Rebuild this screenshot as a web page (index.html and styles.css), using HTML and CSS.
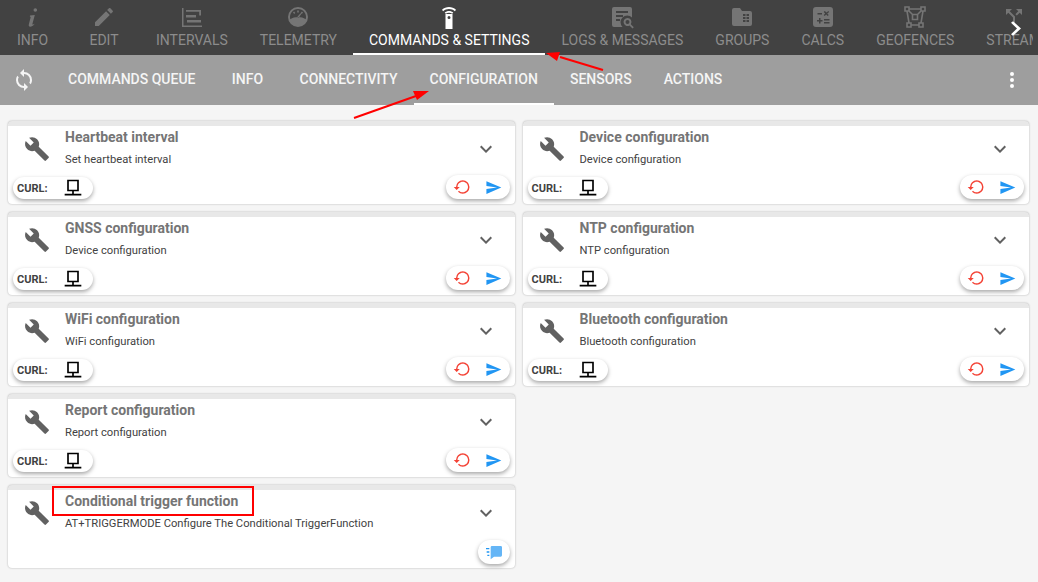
FILE: index.html
```html
<!DOCTYPE html>
<html lang="en">
<head>
  <meta charset="UTF-8">
  <title>Commands &amp; Settings</title>
  <link rel="stylesheet" href="styles.css">
</head>
<body>
  <svg width="0" height="0" class="defs">
    <symbol id="wrench" viewBox="0 0 24 24"><path d="M22.7,19L13.6,9.9C14.5,7.6 14,4.9 12.1,3C10.1,1 7.1,0.6 4.7,1.7L9,6L6,9L1.6,4.7C0.4,7.1 0.9,10.1 2.9,12.1C4.8,14 7.5,14.5 9.8,13.6L18.9,22.7C19.3,23.1 19.9,23.1 20.3,22.7L22.6,20.4C23.1,20 23.1,19.3 22.7,19Z"/></symbol>
    <symbol id="chevron" viewBox="0 0 24 24"><path d="M7.41,8.58L12,13.17L16.59,8.58L18,10L12,16L6,10L7.41,8.58Z"/></symbol>
    <symbol id="desktop" viewBox="0 0 24 24"><path d="M5 2h14v14H5zM7 4v10h10V4zM11 16h2v3h-2zM2 19h20v2H2z" fill-rule="evenodd"/></symbol>
    <symbol id="restore" viewBox="0 0 24 24"><path d="M13 3a9 9 0 0 0-9 9H1l3.89 3.89.07.14L9 12H6c0-3.87 3.13-7 7-7s7 3.13 7 7-3.13 7-7 7c-1.93 0-3.68-.79-4.94-2.06l-1.42 1.42A8.954 8.954 0 0 0 13 21a9 9 0 0 0 0-18z"/></symbol>
    <symbol id="send" viewBox="0 0 24 24"><path d="M2,21L23,12L2,3V10L17,12L2,14V21Z"/></symbol>
  </svg>

  <!-- Main tabs -->
  <nav class="tabs">
    <div class="tab-strip">
      <a class="tab">
        <svg class="tab-icon" viewBox="0 0 24 24"><path d="M13.500 5a1.800 1.800 0 1 1 3.600 0 1.800 1.800 0 0 1-3.600 0zM10 10.500l4.800-.5-2.400 9c-.2.800.4.800 1.800-.3l.3.400c-1.500 1.800-2.800 2.700-4.300 2.700-1.300 0-1.700-.9-1.400-2.200l1.800-7c.1-.6-.2-1-.8-1.100z"/></svg>
        <span>Info</span>
      </a>
      <a class="tab">
        <svg class="tab-icon" viewBox="0 0 24 24"><path d="M20.71,7.04C21.1,6.65 21.1,6 20.71,5.63L18.37,3.29C18,2.9 17.35,2.9 16.96,3.29L15.12,5.12L18.87,8.87M3,17.25V21H6.75L17.81,9.93L14.06,6.18L3,17.25Z"/></svg>
        <span>Edit</span>
      </a>
      <a class="tab">
        <svg class="tab-icon" viewBox="0 0 24 24"><path d="M2 3h1.500v17.500H22V22H2zM6 5h15v5.500h-1.800V6.800H6zM6 10h10v2.500H6zM7 15h14v2.500H7z"/></svg>
        <span>Intervals</span>
      </a>
      <a class="tab">
        <svg class="tab-icon" viewBox="0 0 24 24"><path fill-rule="evenodd" d="M12 2a10 10 0 1 1 0 20 10 10 0 0 1 0-20zm0 2a8 8 0 0 0-7.700 10.200C6.500 12.800 9.200 12 12 12s5.500.8 7.700 2.200A8 8 0 0 0 12 4zm-.8 1.500h1.600v2h-1.600zM7 7.300l1.200-.9 1.100 1.600-1.200.9zm8.800-.9 1.200.9-1.100 1.600-1.200-.9zm-1.300 1.800.9.500-2.700 4-1.300-.9z"/></svg>
        <span>Telemetry</span>
      </a>
      <a class="tab active">
        <svg class="tab-icon" viewBox="0 0 24 24"><path fill-rule="evenodd" d="M8.500 9h7v15h-7zM12 11a1.500 1.500 0 1 0 0 3 1.500 1.500 0 0 0 0-3zM5 4.800C8.800 1.100 15.200 1.100 19 4.800l-1.100 1.400C14.800 3.200 9.200 3.200 6.100 6.200zM7.700 7.600c2.300-2.200 6.300-2.200 8.600 0l-1.100 1.200c-1.700-1.500-4.700-1.500-6.400 0z"/></svg>
        <span>Commands &amp; Settings</span>
      </a>
      <a class="tab">
        <svg class="tab-icon" viewBox="0 0 24 24"><path fill-rule="evenodd" d="M4 2h16a2 2 0 0 1 2 2v8.500a6.500 6.500 0 0 0-9.500 9.500H4a2 2 0 0 1-2-2V4a2 2 0 0 1 2-2zm2 4v2h12V6zm0 4v2h7v-2zm0 4v2h4v-2zm11.500-1a4 4 0 0 1 3.300 6.200l3 3-1.300 1.300-3-3a4 4 0 1 1-2-7.500zm0 2a2 2 0 1 0 0 4 2 2 0 0 0 0-4z"/></svg>
        <span>Logs &amp; Messages</span>
      </a>
      <a class="tab">
        <svg class="tab-icon" viewBox="0 0 24 24"><path fill-rule="evenodd" d="M4 3h6l2 3h8a2 2 0 0 1 2 2v11a2 2 0 0 1-2 2H4a2 2 0 0 1-2-2V5a2 2 0 0 1 2-2zm9 6v2h2.500V9zm3.500 0v2H19V9zM13 12v2h2.500v-2zm3.500 0v2H19v-2zM13 15v2h2.500v-2zm3.500 0v2H19v-2z"/></svg>
        <span>Groups</span>
      </a>
      <a class="tab">
        <svg class="tab-icon" viewBox="0 0 24 24"><path fill-rule="evenodd" d="M5 2h14a3 3 0 0 1 3 3v14a3 3 0 0 1-3 3H5a3 3 0 0 1-3-3V5a3 3 0 0 1 3-3zm1.500 6v1.500H11V8zm7.200-2-1 1 1.500 1.500-1.500 1.500 1 1 1.500-1.500 1.500 1.500 1-1-1.500-1.500L18.200 7l-1-1-1.500 1.500zM8 13v2H6v1.500h2v2h1.500v-2h2V15h-2v-2zm5 1v1.500h5.500V14zm0 3v1.500h5.500V17z"/></svg>
        <span>Calcs</span>
      </a>
      <a class="tab">
        <svg class="tab-icon outline" viewBox="0 0 24 24"><path d="M2 2h4v4H2zM18 2h4v4h-4zM4 18h4v4H4zM16 18h4v4h-4zM6 4h12M4 6l2 12M20 6l-2 12M8 20h8M9.500 9.500h5v5h-5zM6 6l3.500 3.500M18 6l-3.500 3.500"/></svg>
        <span>Geofences</span>
      </a>
      <a class="tab">
        <svg class="tab-icon" viewBox="0 0 24 24"><path d="M14,4L16.29,6.29L13.41,9.17L14.83,10.59L17.71,7.71L20,10V4M10,4H4V10L6.29,7.71L11,12.41V20H13V11.59L7.710,6.290"/></svg>
        <span>Stream</span>
      </a>
    </div>
    <svg class="tabs-next" viewBox="0 0 24 24"><path d="M6 3.500 9 1l12 11L9 23l-3-2.500 9-8.500z"/></svg>
  </nav>

  <!-- Sub tabs -->
  <div class="subtabs">
    <svg class="sync" viewBox="0 0 24 24"><path d="M12,18A6,6 0 0,1 6,12C6,11 6.250,10.030 6.700,9.200L5.240,7.740C4.460,8.970 4,10.430 4,12A8,8 0 0,0 12,20V23L16,19L12,15M12,4V1L8,5L12,9V6A6,6 0 0,1 18,12C18,13 17.750,13.970 17.300,14.800L18.760,16.260C19.540,15.030 20,13.570 20,12A8,8 0 0,0 12,4Z"/></svg>
    <a class="subtab">Commands Queue</a>
    <a class="subtab">Info</a>
    <a class="subtab">Connectivity</a>
    <a class="subtab active">Configuration</a>
    <a class="subtab">Sensors</a>
    <a class="subtab">Actions</a>
    <svg class="more" viewBox="0 0 24 24"><path d="M12 16a2 2 0 1 1 0 4 2 2 0 0 1 0-4zm0-6a2 2 0 1 1 0 4 2 2 0 0 1 0-4zm0-6a2 2 0 1 1 0 4 2 2 0 0 1 0-4z"/></svg>
  </div>

  <!-- Cards -->
  <main class="cards">
    <div class="card">
      <div class="card-body">
        <svg class="wrench"><use href="#wrench"/></svg>
        <div class="card-text"><h3>Heartbeat interval</h3><p>Set heartbeat interval</p></div>
        <svg class="chevron"><use href="#chevron"/></svg>
      </div>
      <div class="card-foot">
        <div class="pill curl"><b>CURL:</b><svg><use href="#desktop"/></svg></div>
        <div class="pill actions"><svg class="reset"><use href="#restore"/></svg><svg class="send"><use href="#send"/></svg></div>
      </div>
    </div>
    <div class="card">
      <div class="card-body">
        <svg class="wrench"><use href="#wrench"/></svg>
        <div class="card-text"><h3>Device configuration</h3><p>Device configuration</p></div>
        <svg class="chevron"><use href="#chevron"/></svg>
      </div>
      <div class="card-foot">
        <div class="pill curl"><b>CURL:</b><svg><use href="#desktop"/></svg></div>
        <div class="pill actions"><svg class="reset"><use href="#restore"/></svg><svg class="send"><use href="#send"/></svg></div>
      </div>
    </div>
    <div class="card">
      <div class="card-body">
        <svg class="wrench"><use href="#wrench"/></svg>
        <div class="card-text"><h3>GNSS configuration</h3><p>Device configuration</p></div>
        <svg class="chevron"><use href="#chevron"/></svg>
      </div>
      <div class="card-foot">
        <div class="pill curl"><b>CURL:</b><svg><use href="#desktop"/></svg></div>
        <div class="pill actions"><svg class="reset"><use href="#restore"/></svg><svg class="send"><use href="#send"/></svg></div>
      </div>
    </div>
    <div class="card">
      <div class="card-body">
        <svg class="wrench"><use href="#wrench"/></svg>
        <div class="card-text"><h3>NTP configuration</h3><p>NTP configuration</p></div>
        <svg class="chevron"><use href="#chevron"/></svg>
      </div>
      <div class="card-foot">
        <div class="pill curl"><b>CURL:</b><svg><use href="#desktop"/></svg></div>
        <div class="pill actions"><svg class="reset"><use href="#restore"/></svg><svg class="send"><use href="#send"/></svg></div>
      </div>
    </div>
    <div class="card">
      <div class="card-body">
        <svg class="wrench"><use href="#wrench"/></svg>
        <div class="card-text"><h3>WiFi configuration</h3><p>WiFi configuration</p></div>
        <svg class="chevron"><use href="#chevron"/></svg>
      </div>
      <div class="card-foot">
        <div class="pill curl"><b>CURL:</b><svg><use href="#desktop"/></svg></div>
        <div class="pill actions"><svg class="reset"><use href="#restore"/></svg><svg class="send"><use href="#send"/></svg></div>
      </div>
    </div>
    <div class="card">
      <div class="card-body">
        <svg class="wrench"><use href="#wrench"/></svg>
        <div class="card-text"><h3>Bluetooth configuration</h3><p>Bluetooth configuration</p></div>
        <svg class="chevron"><use href="#chevron"/></svg>
      </div>
      <div class="card-foot">
        <div class="pill curl"><b>CURL:</b><svg><use href="#desktop"/></svg></div>
        <div class="pill actions"><svg class="reset"><use href="#restore"/></svg><svg class="send"><use href="#send"/></svg></div>
      </div>
    </div>
    <div class="card">
      <div class="card-body">
        <svg class="wrench"><use href="#wrench"/></svg>
        <div class="card-text"><h3>Report configuration</h3><p>Report configuration</p></div>
        <svg class="chevron"><use href="#chevron"/></svg>
      </div>
      <div class="card-foot">
        <div class="pill curl"><b>CURL:</b><svg><use href="#desktop"/></svg></div>
        <div class="pill actions"><svg class="reset"><use href="#restore"/></svg><svg class="send"><use href="#send"/></svg></div>
      </div>
    </div>
    <div class="card card-first">
      <div class="card-body">
        <svg class="wrench"><use href="#wrench"/></svg>
        <div class="card-text"><h3>Conditional trigger function</h3><p>AT+TRIGGERMODE Configure The Conditional TriggerFunction</p></div>
        <svg class="chevron"><use href="#chevron"/></svg>
      </div>
      <div class="card-foot foot-end">
        <div class="pill message">
          <svg viewBox="0 0 24 24"><path class="msg-lines" d="M0 6h5v2H0zM1 11h4v2H1zM2 16h3v2H2z"/><path class="msg-bubble" d="M9 3h13a2 2 0 0 1 2 2v12a2 2 0 0 1-2 2H12l-5 4V5a2 2 0 0 1 2-2z"/></svg>
        </div>
      </div>
    </div>
  </main>

  <!-- Annotations drawn on top of the screenshot -->
  <svg class="arrows" viewBox="0 0 1038 582">
    <path d="M354 118 L416 96" />
    <polygon points="429,91 413,91 417,100" />
    <path d="M603 70 L560 57" />
    <polygon points="546,53 560,52 557,61" />
  </svg>
  <div class="highlight"></div>
</body>
</html>
```

FILE: styles.css
```css
* {
  box-sizing: border-box;
  margin: 0;
  padding: 0;
}

html,
body {
  height: 582px;
  overflow: hidden;
}

body {
  font-family: Roboto, "Liberation Sans", sans-serif;
  background-color: #f5f5f5;
  position: relative;
}

.defs {
  position: absolute;
}

/* Main tabs */
.tabs {
  height: 55px;
  background-color: #424242;
  position: relative;
}

.tab-strip {
  display: flex;
  width: 1033px;
  overflow: hidden;
}

.tab {
  flex: none;
  min-width: 72px;
  height: 55px;
  padding: 5px 16px 0;
  display: flex;
  flex-direction: column;
  align-items: center;
  font-size: 14px;
  line-height: 20px;
  text-transform: uppercase;
}

.tab:first-child {
  min-width: 68px;
  padding-left: 17px;
  align-items: flex-start;
}

.tab:first-child .tab-icon {
  margin-left: 3px;
}

.tab-icon {
  width: 24px;
  height: 24px;
  margin-bottom: 1px;
  fill: #757575;
}

.tab-icon.outline {
  fill: none;
  stroke: #757575;
  stroke-width: 1.6;
}

.tab span {
  color: #8c8c8c;
  white-space: nowrap;
}

.tab.active {
  box-shadow: inset 0 -2px 0 #fff;
}

.tab.active span {
  color: #fff;
}

.tab.active .tab-icon {
  fill: #fff;
}

.tabs-next {
  position: absolute;
  top: 19px;
  left: 1007px;
  width: 16px;
  height: 19px;
  fill: #fff;
}

/* Sub tabs */
.subtabs {
  height: 50px;
  background-color: #9e9e9e;
  display: flex;
  align-items: stretch;
  padding-left: 12px;
}

.sync {
  width: 24px;
  height: 24px;
  margin: 13px 16px 0 0;
  fill: #f5f5f5;
}

.subtab {
  min-width: 72px;
  padding: 0 16px 2px;
  display: flex;
  align-items: center;
  justify-content: center;
  font-size: 14px;
  font-weight: 500;
  text-transform: uppercase;
  color: #f5f5f5;
  white-space: nowrap;
}

.subtab.active {
  box-shadow: inset 0 -2px 0 #fff;
}

.more {
  width: 24px;
  height: 24px;
  margin: 13px 14px 0 auto;
  fill: #fff;
}

/* Cards */
.cards {
  display: grid;
  grid-template-columns: 506.5px 506.5px;
  grid-auto-rows: 83px;
  gap: 8px;
  padding: 16px 0 0 8px;
}

.card {
  background-color: #fff;
  border-top: 5px solid #e8e8e8;
  border-radius: 4px;
  box-shadow: 0 0 2px rgba(0, 0, 0, 0.3);
  display: flex;
  flex-direction: column;
  justify-content: space-between;
  padding-bottom: 5px;
}

.card-first {
  grid-column: 1;
}

.card-body {
  display: flex;
  align-items: flex-start;
  padding: 2px 17px 0 16px;
}

.wrench {
  width: 26px;
  height: 26px;
  margin-top: 8px;
  fill: #616161;
  flex: none;
}

.card-text {
  flex: 1;
  margin-left: 15px;
}

.card-text h3 {
  font-size: 14px;
  font-weight: 700;
  line-height: 18px;
  color: #757575;
}

.card-text p {
  margin-top: 6px;
  font-size: 11.2px;
  line-height: 16px;
  color: #424242;
}

.chevron {
  width: 24px;
  height: 24px;
  margin-top: 9px;
  fill: #616161;
  flex: none;
}

.card-foot {
  display: flex;
  justify-content: space-between;
  align-items: flex-end;
  padding: 0 5px;
}

.foot-end {
  justify-content: flex-end;
}

.pill {
  height: 22px;
  background-color: #fff;
  border-radius: 11px;
  box-shadow: 0 2px 4px rgba(0, 0, 0, 0.35);
  display: flex;
  align-items: center;
}

.curl {
  width: 80px;
  padding-left: 4px;
}

.curl b {
  font-size: 11px;
  color: #424242;
  width: 46px;
}

.curl svg {
  width: 20px;
  height: 20px;
  fill: #000;
}

.actions {
  width: 64px;
  height: 24px;
  border-radius: 12px;
  padding-left: 7px;
  gap: 14px;
}

.reset {
  width: 18px;
  height: 18px;
  fill: #f44336;
}

.send {
  width: 17px;
  height: 17px;
  fill: #2196f3;
}

.message {
  width: 32px;
  height: 24px;
  border-radius: 12px;
  justify-content: center;
  margin-bottom: -1px;
}

.message svg {
  width: 16px;
  height: 16px;
}

.msg-bubble {
  fill: #64b5f6;
}

.msg-lines {
  fill: #2196f3;
}

/* Annotations */
.arrows {
  position: absolute;
  top: 0;
  left: 0;
  width: 1038px;
  height: 582px;
  pointer-events: none;
}

.arrows path {
  stroke: #f00;
  stroke-width: 2;
  fill: none;
}

.arrows polygon {
  fill: #f00;
}

.highlight {
  position: absolute;
  left: 52px;
  top: 486px;
  width: 202px;
  height: 30px;
  border: 2px solid #f00;
}
```
